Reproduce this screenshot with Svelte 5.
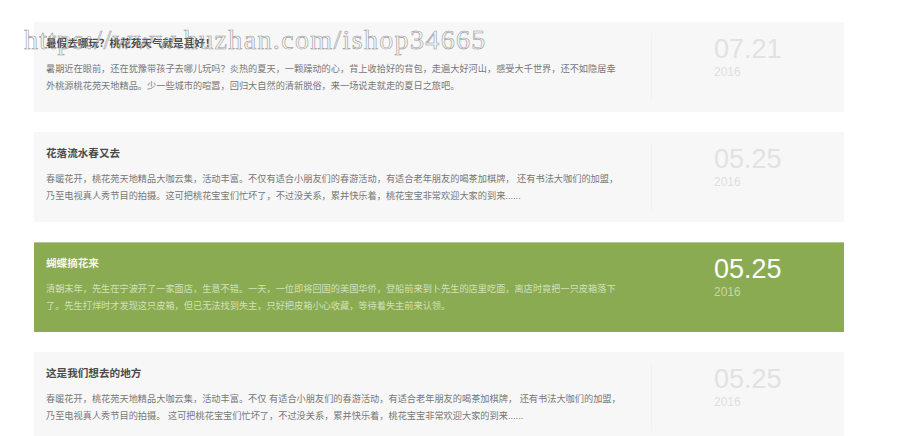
<script>
const items = [
	{
		title: '暑假去哪玩？桃花苑天气就是甚好！',
		text: '暑期近在眼前，还在犹豫带孩子去哪儿玩吗？炎热的夏天，一颗躁动的心，背上收拾好的背包，走遍大好河山，感受大千世界，还不如隐居幸外桃源桃花苑天地精品。少一些城市的喧嚣，回归大自然的清新脱俗，来一场说走就走的夏日之旅吧。',
		date: '07.21',
		year: '2016'
	},
	{
		title: '花落流水春又去',
		text: '春暖花开，桃花苑天地精品大咖云集，活动丰富。不仅有适合小朋友们的春游活动，有适合老年朋友的喝茶加棋牌， 还有书法大咖们的加盟， 乃至电视真人秀节目的拍摄。这可把桃花宝宝们忙坏了，不过没关系，累并快乐着，桃花宝宝非常欢迎大家的到来......',
		date: '05.25',
		year: '2016'
	},
	{
		title: '蝴蝶摘花来',
		text: '清朝末年，先生在宁波开了一家面店，生意不错。一天，一位即将回国的美国华侨，登船前来到卜先生的店里吃面，离店时竟把一只皮箱落下了。先生打烊时才发现这只皮箱，但已无法找到失主，只好把皮箱小心收藏，等待着失主前来认领。',
		date: '05.25',
		year: '2016',
		active: true
	},
	{
		title: '这是我们想去的地方',
		text: '春暖花开，桃花苑天地精品大咖云集，活动丰富。不仅 有适合小朋友们的春游活动，有适合老年朋友的喝茶加棋牌， 还有书法大咖们的加盟， 乃至电视真人秀节目的拍摄。 这可把桃花宝宝们忙坏了，不过没关系，累并快乐着，桃花宝宝非常欢迎大家的到来......',
		date: '05.25',
		year: '2016'
	}
];
</script>

<div class="page">
	<ul class="list">
		{#each items as item}
			<li class="card" class:active={item.active}>
				<div class="main">
					<h3>{item.title}</h3>
					<p>{item.text}</p>
				</div>
				<div class="when">
					<div class="date">{item.date}</div>
					<div class="year">{item.year}</div>
				</div>
			</li>
		{/each}
	</ul>
	<div class="mark">https://www.huzhan.com/ishop34665</div>
</div>

<style>
	:global(body) {
		background: #fff;
		overflow: hidden;
	}
	.page {
		position: relative;
		height: 436px;
		overflow: hidden;
		font-family: "Liberation Sans", "Noto Sans CJK SC", sans-serif;
	}
	.list {
		list-style: none;
		margin: 0;
		padding: 22px 56px 0 34px;
		display: flex;
		flex-direction: column;
		gap: 20px;
	}
	.card {
		flex: none;
		height: 90px;
		display: flex;
		background: #f7f7f7;
		box-sizing: border-box;
		padding: 11px 0;
	}
	.main {
		width: 618px;
		box-sizing: border-box;
		padding: 0 29px 0 12px;
		border-right: 1px solid #f1f1f1;
	}
	h3 {
		margin: 0;
		font-size: 10.6px;
		line-height: 20px;
		font-weight: bold;
		color: #4a4a4a;
	}
	p {
		margin: 8px 0 0;
		font-size: 9.2px;
		line-height: 16.5px;
		color: #777;
	}
	.when {
		padding: 1px 0 0 62px;
	}
	.date {
		font-size: 27px;
		line-height: 31px;
		color: #e2e2e2;
	}
	.year {
		font-size: 12px;
		line-height: 15px;
		color: #dedede;
	}
	.active {
		background: #8aab52;
		border-top: 1px solid #b4c98f;
		padding-top: 10px;
	}
	.active h3 {
		color: #f4f7ec;
	}
	.active p {
		color: #d3e0bb;
	}
	.active .main {
		border-right-color: #8aab52;
	}
	.active .date {
		color: #fff;
	}
	.active .year {
		color: #c5d6a6;
	}
	.mark {
		position: absolute;
		left: 24px;
		top: 25px;
		font-family: "Liberation Serif", serif;
		font-size: 28px;
		line-height: 30px;
		letter-spacing: 1.35px;
		white-space: nowrap;
		color: transparent;
		-webkit-text-stroke: 0.6px #999;
	}
</style>
